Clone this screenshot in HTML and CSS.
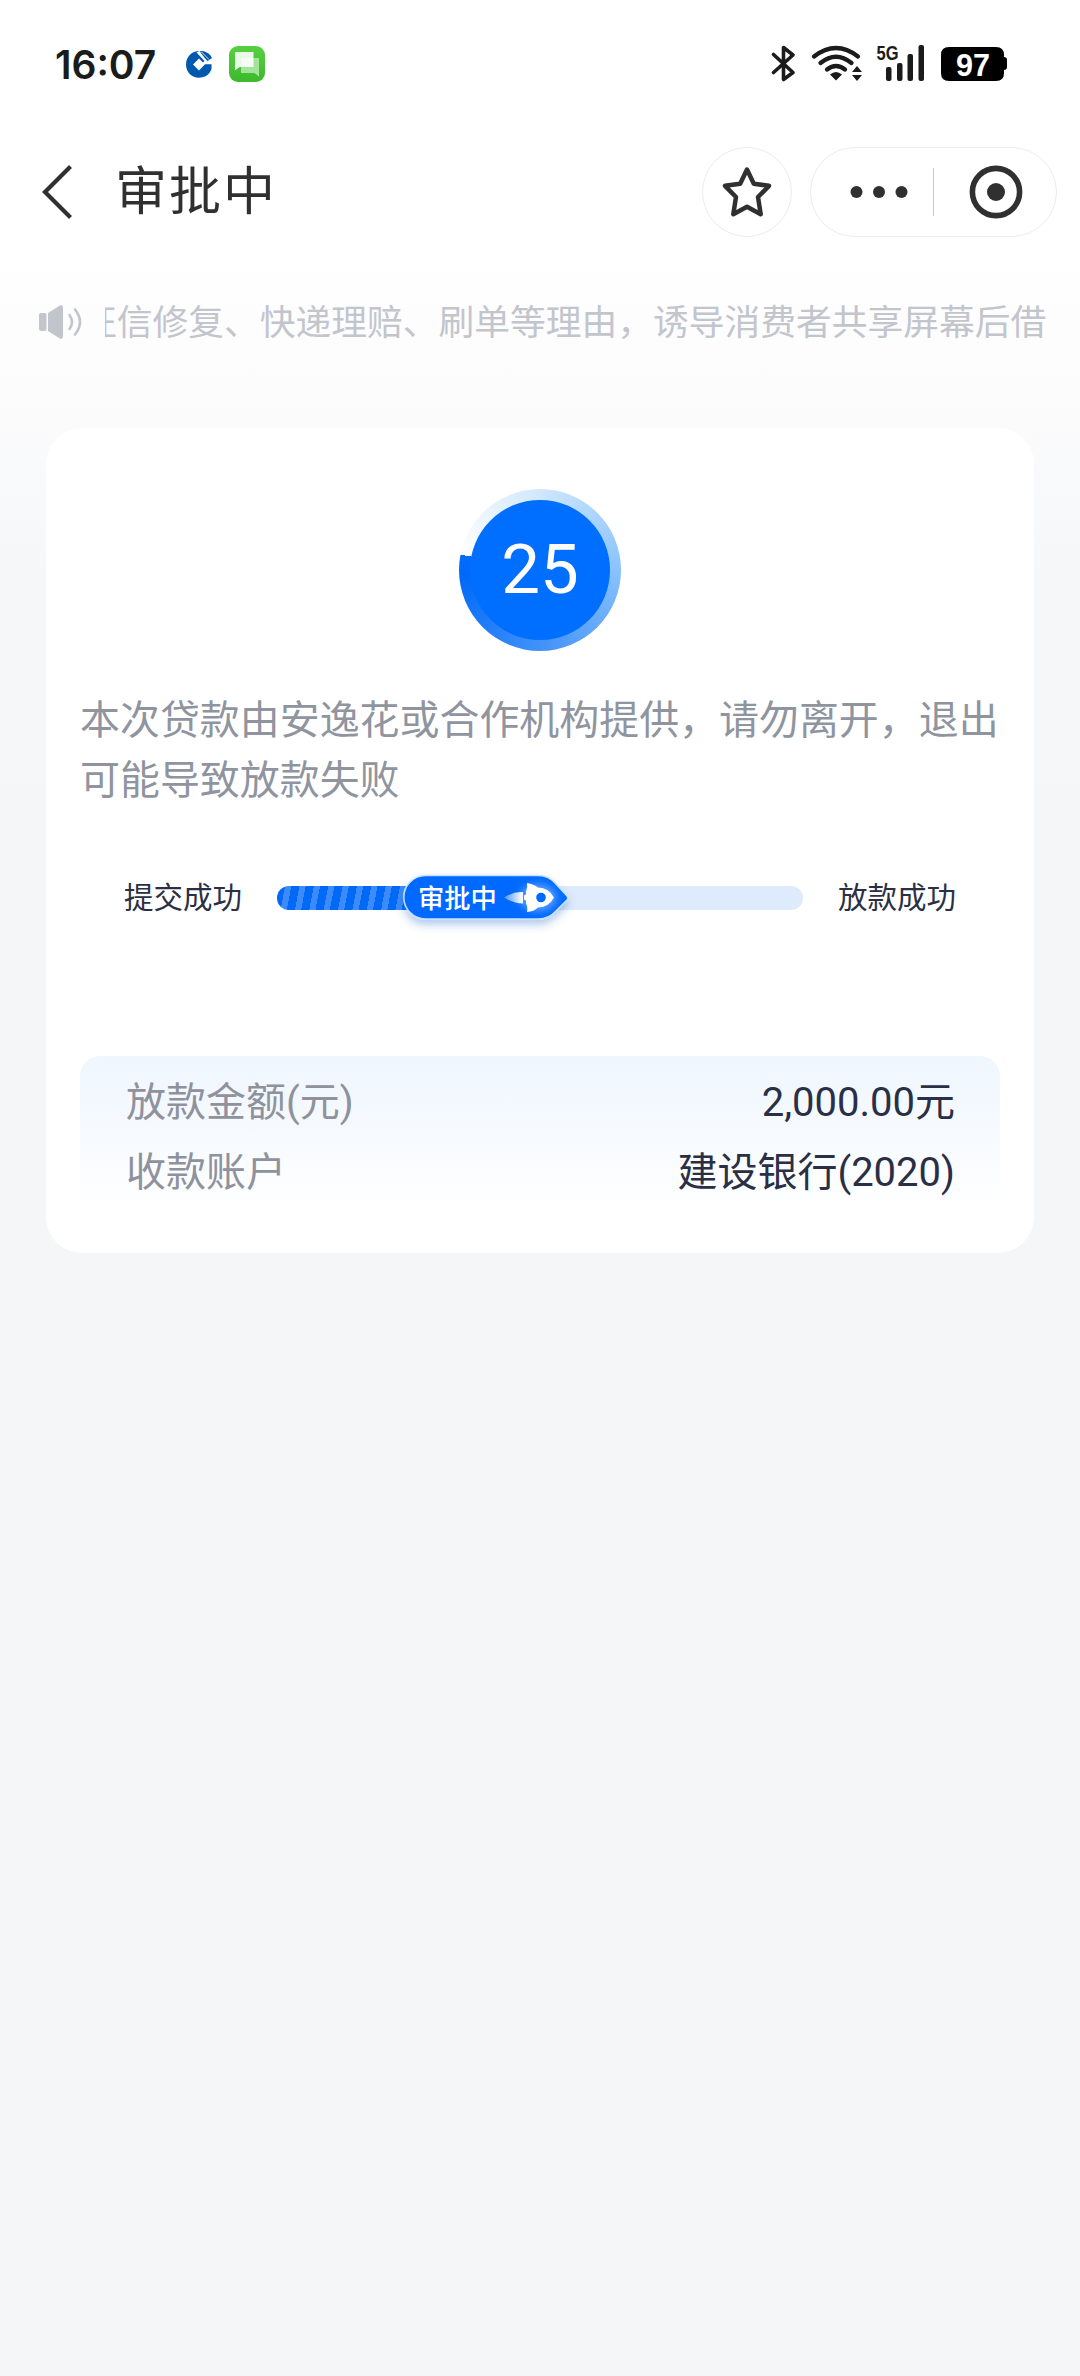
FILE: index.html
```html
<!DOCTYPE html>
<html lang="zh-CN">
<head>
<meta charset="utf-8">
<title>审批中</title>
<link rel="stylesheet" href="styles.css">
</head>
<body>
<div class="status-bar">
  <span class="time">16:07</span>
  <svg class="ico-bank" width="26" height="28" viewBox="0 0 26 28">
    <path fill="#0059ae" fill-rule="evenodd" d="M13.5 1C5.500 1 0 7 0 14.500 0 22 5.500 27.700 13 27.700c6 0 10.500-3.200 12.500-8.700V14.200H19L13 20.500 7 14.500 13 8.500l4 4 1.500-1.500L10.500 2.500z"/>
    <path fill="#0059ae" d="M13.500 1c4.500-.5 8 1 11 4.500L26 8l-5 3.500z"/>
    <path stroke="#fff" stroke-width="1" d="M12.500 2.300l9 9"/>
    <path stroke="#fff" stroke-width=".8" d="M15 1.500l8 8"/>
  </svg>
  <svg class="ico-msg" width="36" height="36" viewBox="0 0 36 36">
    <defs><linearGradient id="msg" x1="0" y1="0" x2="0" y2="1"><stop offset="0" stop-color="#57cf40"/><stop offset="1" stop-color="#3db92f"/></linearGradient></defs>
    <rect width="36" height="36" rx="9" fill="url(#msg)"/>
    <path fill="#a5e39b" d="M12 12h18v18.500l-4.500-3.500H12z"/>
    <path fill="#fff" fill-opacity=".88" d="M6 6h18.500v15H10.500L6 24.500z"/>
  </svg>
  <svg class="ico-system" width="240" height="40" viewBox="0 0 240 40">
    <g fill="none" stroke="#1b1b1b" stroke-linecap="round" stroke-linejoin="round">
      <path stroke-width="3.600" d="M2.500 10.500L22 28.500 12.500 35.500V3.500L22 11 2.500 28.500"/>
      <path stroke-width="4.300" d="M43 12.500Q65 -4.500 87 12.500M49.500 19Q65 6.500 80.500 19M56 25.500Q65 18.500 74 25.500"/>
    </g>
    <g fill="#1b1b1b">
      <path d="M65 36.500l-6-6q6-5 12 0zM86 22l5 6H81zM86 37l-5-6h10z"/>
      <rect x="115" y="23" width="5.500" height="14" rx="2"/>
      <rect x="126" y="19" width="5.500" height="18" rx="2"/>
      <rect x="136.500" y="10" width="5.500" height="27" rx="2"/>
      <rect x="147.500" y="1" width="5.500" height="36" rx="2"/>
      <text class="net" x="105.500" y="16" textLength="22" lengthAdjust="spacingAndGlyphs">5G</text>
    </g>
    <path fill="#000" d="M178 3h47q8 0 8 8v2q3 0 3 3v7q0 3-3 3v3q0 8-8 8h-47q-8 0-8-8V11q0-8 8-8z"/>
    <text class="battery" x="185" y="31.500" textLength="34" lengthAdjust="spacingAndGlyphs">97</text>
  </svg>
</div>

<div class="nav">
  <svg class="back" width="32" height="54" viewBox="0 0 32 54"><path fill="none" stroke="#303030" stroke-width="4.200" d="M29.500 1.500L4 27l25.500 25.500"/></svg>
  <h1 class="title">审批中</h1>
  <div class="fav">
    <svg width="50" height="52" viewBox="0 0 50 52"><path fill="none" stroke="#303030" stroke-width="4.500" stroke-linejoin="round" d="M25 3.500l6.800 14.200 15.200 2.100-11 11.200 2.700 17.200L25 40.700 11.300 48.200 14 31 3 19.800l15.200-2.100z"/></svg>
  </div>
  <div class="capsule">
    <svg class="dots" width="58" height="12" viewBox="0 0 58 12"><g fill="#303030"><circle cx="6.500" cy="6" r="6"/><circle cx="29" cy="6" r="6"/><circle cx="51.500" cy="6" r="6"/></g></svg>
    <span class="divider"></span>
    <svg class="target" width="54" height="54" viewBox="0 0 54 54"><circle cx="27" cy="27" r="23.600" fill="none" stroke="#303030" stroke-width="5.600"/><circle cx="27" cy="27" r="9" fill="#303030"/></svg>
  </div>
</div>

<div class="notice">
  <svg width="44" height="36" viewBox="0 0 44 36">
    <g fill="#c3c5cd"><rect x="0" y="9" width="7.500" height="18" rx="2"/><path d="M9 9L20 2q4-2.500 4 2v28q0 4.500-4 2L9 27z"/></g>
    <path fill="none" stroke="#c3c5cd" stroke-width="2.600" stroke-linecap="round" d="M30.500 11Q35.500 18 30.500 25M36 5.500Q46 18 36 30.500"/>
  </svg>
  <div class="marquee">征信修复、快递理赔、刷单等理由，诱导消费者共享屏幕后借</div>
</div>

<main class="card">
  <div class="countdown"><span class="disc">25</span></div>
  <p class="tip">本次贷款由安逸花或合作机构提供，请勿离开，退出可能导致放款失败</p>
  <div class="progress">
    <span class="step">提交成功</span>
    <div class="track">
      <div class="fill"></div>
      <div class="badge">
        <svg class="badge-bg" width="192" height="70" viewBox="0 0 192 70">
          <defs>
            <filter id="soft" x="-20%" y="-30%" width="140%" height="190%"><feDropShadow dx="0" dy="5" stdDeviation="4" flood-color="#0a50c8" flood-opacity=".3"/></filter>
            <filter id="glow" x="-50%" y="-50%" width="200%" height="200%"><feGaussianBlur stdDeviation="4"/></filter>
            <linearGradient id="flame"><stop offset="0" stop-color="#fff" stop-opacity=".3"/><stop offset="1" stop-color="#fff"/></linearGradient>
          </defs>
          <path filter="url(#soft)" fill="#0069ff" stroke="#c5e3ff" stroke-width="1.500" d="M34.500 10.500H147Q158 10.500 165 19L176 31q1.500 2 0 4L165 46q-7 8-18 8H34.500a21.750 21.750 0 0 1 0-43.500z"/>
          <g transform="translate(3 .5)">
            <ellipse filter="url(#glow)" cx="144" cy="32" rx="18" ry="13" fill="#fff" opacity=".4"/>
            <path fill="url(#flame)" d="M110 32Q119 26 129 26.500V38Q119 38 110 32z"/>
            <path fill="#fff" d="M133 17.500q7 1 11 4.500 11 .5 16 10-5 9.500-16 10-4 4-11 4.500 1-5-1-8.500v-3l-2-1v-4l2-1v-3q2-4 1-8.500z"/>
            <circle cx="147" cy="32" r="4.800" fill="#0069ff"/>
          </g>
        </svg>
        <span class="badge-text">审批中</span>
      </div>
    </div>
    <span class="step">放款成功</span>
  </div>
  <dl class="info">
    <div class="row"><dt>放款金额(元)</dt><dd>2,000.00元</dd></div>
    <div class="row"><dt>收款账户</dt><dd>建设银行(2020)</dd></div>
  </dl>
</main>
</body>
</html>
```

FILE: styles.css
```css
* { box-sizing: border-box; margin: 0; padding: 0; }

body {
  width: 1080px;
  height: 2376px;
  overflow: hidden;
  background: linear-gradient(#fff 0, #fff 240px, #fbfbfc 420px, #f5f7f9 570px, #f5f6f8 800px) #f5f6f8;
  font-family: Roboto, "Noto Sans CJK SC", sans-serif;
  color: #2a2f45;
}

svg { display: block; flex: none; overflow: visible; }

.status-bar {
  display: flex;
  align-items: center;
  height: 128px;
  padding: 0 69px 0 55px;
}
.time {
  width: 131px;
  font: 600 39px/1 Inter, sans-serif;
  color: #1b1b1b;
}
.ico-msg { margin-left: 17px; }
.ico-system { margin-left: auto; }
.net { font: 700 21px "Liberation Sans", sans-serif; }
.battery { font: 700 32px "Liberation Sans", sans-serif; fill: #fff; }

.nav {
  display: flex;
  align-items: center;
  height: 128px;
  padding: 0 23px 0 41px;
}
.title {
  margin: 0 auto 0 42px;
  padding-top: 2px;
  font-size: 52px;
  line-height: 60px;
  font-weight: 400;
  letter-spacing: 2px;
  color: #303030;
}
.fav, .capsule {
  display: flex;
  align-items: center;
  height: 90px;
  border: 1px solid #ececec;
  border-radius: 45px;
  background: #fff;
}
.fav { width: 90px; justify-content: center; }
.capsule { width: 247px; margin-left: 18px; padding-left: 39px; }
.divider { width: 1px; height: 48px; margin: 0 35px 0 25px; background: #c8c8c8; }

.notice {
  display: flex;
  align-items: center;
  height: 132px;
  padding-left: 39px;
}
.marquee {
  width: 941px;
  margin-left: 22px;
  padding-top: 1px;
  overflow: hidden;
  white-space: nowrap;
  text-indent: -24px;
  font-size: 35.75px;
  line-height: 54px;
  color: #c3c5cd;
}

.card {
  width: 988px;
  height: 825px;
  margin: 40px auto 0;
  padding: 61px 34px 0;
  border-radius: 36px;
  background: #fff;
}
.countdown {
  display: flex;
  align-items: center;
  justify-content: center;
  width: 162px;
  height: 162px;
  margin: 0 auto;
  border-radius: 50%;
  background: conic-gradient(from 281deg, #fff 0deg, #d3e9fc 75deg, #8cc4fd 165deg, #4593f8 255deg, #0069f8 345deg, #006cff 360deg);
}
.disc {
  width: 140px;
  height: 140px;
  border-radius: 50%;
  background: #006eff;
  color: #fff;
  font-size: 69px;
  line-height: 139px;
  text-align: center;
}
.tip {
  width: 922px;
  margin-top: 40px;
  font-size: 39.95px;
  line-height: 60px;
  color: #8f949f;
}
.progress {
  display: flex;
  align-items: center;
  justify-content: space-between;
  height: 60px;
  margin-top: 57px;
  padding: 0 44px;
}
.step { font-size: 29.500px; line-height: 44px; }
.track {
  position: relative;
  width: 526px;
  height: 24px;
  border-radius: 12px;
  background: #deebfc;
}
.fill {
  width: 150px;
  height: 24px;
  border-radius: 12px 0 0 12px;
  background: repeating-linear-gradient(101deg, #0069f5 0 8px, #3d8bfa 8px 14.100px);
}
.badge { position: absolute; left: 114px; top: -21px; width: 192px; height: 70px; }
.badge-text {
  position: absolute;
  left: 27px;
  top: 15px;
  font-size: 26.300px;
  line-height: 38px;
  font-weight: 500;
  color: #fff;
}
.info {
  height: 156px;
  margin-top: 128px;
  padding: 12px 45px 0 46px;
  border-radius: 20px;
  background: linear-gradient(#eff6ff, #f6faff 45%, #fff);
}
.row {
  display: flex;
  align-items: center;
  justify-content: space-between;
  height: 70px;
  font-size: 40px;
  line-height: 60px;
}
.row dt { color: #8f929c; }
```
